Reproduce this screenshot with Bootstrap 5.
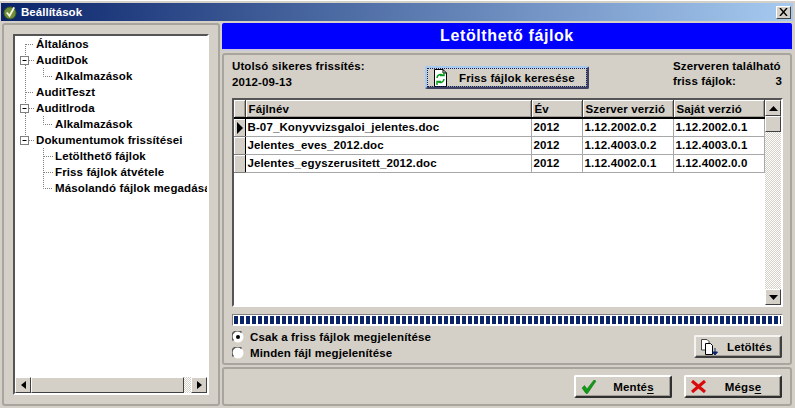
<!DOCTYPE html>
<html lang="hu">
<head>
<meta charset="UTF-8" />
<title>Beállítások</title>
<link rel="stylesheet" href="https://cdn.jsdelivr.net/npm/bootstrap@5.3.0/dist/css/bootstrap.min.css" />
<style>
  html, body { margin: 0; height: 408px; overflow: hidden; background: #d4d0c8; }
  body, .btn, table { font-family: "Liberation Sans", Arial, sans-serif; font-size: 11.5px; font-weight: 700; color: #000; letter-spacing: .12px; line-height: 16px; }
  .dlg-window { width: 795px; height: 408px; padding: 2px 3px 2px 2px; border-top: 1px solid #fff; }
  .title-bar { height: 18px; margin-left: -1px; margin-right: -1px; padding: 0 2px 0 2px; color: #fff; font-size: 11.5px; letter-spacing: .03px; background: linear-gradient(90deg, #0a246a, #a6caf0); }
  .title-icon { width: 14px; height: 15px; flex: none; }
  .close-box { width: 15px; height: 13px; background: #d4d0c8; border: 1px solid; border-color: #fff #404040 #404040 #fff; }
  .dlg-body { gap: 2px; margin-top: 2px; height: 383px; }
  .group-box { border: 2px solid #a8a59e; border-radius: 3px; background: #d4d0c8; }
  .side-panel { width: 218px; flex: none; padding: 9px; }
  .sunken { border: 2px solid; border-color: #555 #fff #fff #555; }
  .tree-box { height: 100%; background: #fff; }
  .tree-rows { flex: 1; overflow: hidden; }
  .tree-row { height: 16px; white-space: nowrap; }
  .tree-row svg { flex: none; display: block; }
  .h-bar { height: 16px; flex: none; background: #d4d0c8; }
  .sb-btn { flex: none; background: #d4d0c8; border: 1px solid; border-color: #fff #404040 #404040 #fff; }
  .h-bar .sb-btn { width: 16px; height: 16px; }
  .sb-thumb { background: #d4d0c8; border: 1px solid; border-color: #fff #404040 #404040 #fff; }
  .sb-track { background: repeating-conic-gradient(#fff 0 25%, #d4d0c8 0 50%) 0 0 / 2px 2px; }
  .main-col { flex: 1; min-width: 0; gap: 2px; }
  .head-strip { height: 28px; flex: none; background: #0000ff; color: #fff; font-size: 16px; letter-spacing: .6px; border-radius: 2px; border-bottom: 2px solid #c8c8e0; }
  .work-panel { height: 312px; flex: none; padding: 3px 7px 0 8px; }
  .info-row { height: 40px; }
  .info-left { width: 193px; flex: none; }
  .info-right { width: 109px; flex: none; margin: 1px 1px 0 auto; line-height: 15px; white-space: nowrap; }
  .w95-btn { --bs-btn-padding-y: 0; --bs-btn-padding-x: 0; --bs-btn-border-radius: 0; --bs-btn-hover-bg: #d4d0c8; background: #d4d0c8; border: 2px solid; border-color: #f4f3f0 #404040 #404040 #f4f3f0; border-radius: 2px; display: flex; align-items: center; color: #000; box-shadow: inset -1px -1px 0 #a09c94; }
  .search-btn { width: 164px; height: 23px; margin-top: 8px; padding-left: 6px; outline: 1px dotted #0a246a; outline-offset: -3px; border-color: #a6caf0 #404060 #404060 #a6caf0; }
  .search-btn span { margin-left: 11px; }
  .grid-box { height: 209px; background: #fff; width: 551px; }
  .file-grid { width: 530px; flex: none; }
  .file-grid table { width: 530px; table-layout: fixed; border-collapse: collapse; }
  .file-grid th { height: 18px; padding: 0 0 0 3px; background: #d4d0c8; border-right: 1px solid #404040; border-bottom: 2px solid #000; box-shadow: inset 1px 1px 0 #fff, inset -1px -1px 0 #a09c94; font-weight: 700; }
  .file-grid td { height: 18px; padding: 0 0 1px 2px; border-right: 1px solid #a8a8a8; border-bottom: 1px solid #a8a8a8; white-space: nowrap; overflow: hidden; background: #fff; }
  .file-grid .row-head { padding: 0; background: #d4d0c8; border-right: 1px solid #000; box-shadow: inset 1px 1px 0 #fff; border-bottom: 1px solid #808080; }
  .row-arrow { display: block; margin-left: 3px; }
  .v-bar { width: 16px; flex: none; margin-left: 1px; }
  .v-bar .sb-btn { height: 16px; }
  .v-bar .sb-thumb { height: 16px; flex: none; }
  .progress-box { height: 12px; margin-top: 7px; width: 551px; border-width: 1px; padding: 1px; background: #fff; border-color: #808080 #fff #fff #808080; }
  .progress-fill { height: 100%; background: repeating-linear-gradient(90deg, #0a246a 0 4px, #fff 4px 6px); }
  .radio-col { padding-top: 3px; }
  .radio-row { height: 16px; gap: 6px; }
  .radio-dot { width: 12px; height: 12px; flex: none; }
  .get-btn { width: 88px; height: 23px; margin: 9px 1px 0 0; padding-left: 4px; }
  .get-btn span { margin-left: 9px; }
  .foot-panel { height: 39px; flex: none; padding: 6px 8px 0 0; gap: 12px; }
  .foot-btn { width: 98px; height: 23px; padding-left: 5px; border-color: #fff #303030 #303030 #fff; }
  .foot-btn span { flex: 1; text-align: center; }
  .foot-btn u { text-underline-offset: 2px; }
</style>
</head>
<body>
<svg width="0" height="0" class="d-block">
  <defs>
    <symbol id="root-first" viewBox="0 0 21 16"><path d="M10.5 8V16M11 8.5H19" stroke="#808080" stroke-dasharray="1 1" fill="none"/></symbol>
    <symbol id="root-line" viewBox="0 0 21 16"><path d="M10.5 0V16M11 8.5H19" stroke="#808080" stroke-dasharray="1 1" fill="none"/></symbol>
    <symbol id="root-open" viewBox="0 0 21 16"><path d="M10.5 0V4M14 8.5H19" stroke="#808080" stroke-dasharray="1 1" fill="none"/><rect x="5.5" y="4.5" width="8" height="8" fill="#fff" stroke="#808080"/><path d="M7.5 8.5H11.5" stroke="#000"/></symbol>
    <symbol id="root-open-mid" viewBox="0 0 21 16"><path d="M10.5 0V4M10.5 13V16M14 8.5H19" stroke="#808080" stroke-dasharray="1 1" fill="none"/><rect x="5.5" y="4.5" width="8" height="8" fill="#fff" stroke="#808080"/><path d="M7.5 8.5H11.5" stroke="#000"/></symbol>
    <symbol id="kid-pass" viewBox="0 0 40 16"><path d="M10.5 0V16M28.5 0V8.5H38" stroke="#808080" stroke-dasharray="1 1" fill="none"/></symbol>
    <symbol id="kid-mid" viewBox="0 0 40 16"><path d="M28.5 0V16M29 8.5H38" stroke="#808080" stroke-dasharray="1 1" fill="none"/></symbol>
    <symbol id="kid-last" viewBox="0 0 40 16"><path d="M28.5 0V8.5H38" stroke="#808080" stroke-dasharray="1 1" fill="none"/></symbol>
  </defs>
</svg>
<div class="dlg-window d-flex flex-column">
  <div class="title-bar d-flex align-items-center gap-1">
    <svg class="title-icon" viewBox="0 0 15 15"><circle cx="7.5" cy="8" r="6.5" fill="#6f8f3a" stroke="#3c5a1c"/><path d="M4 7.5L7 11L12 2" fill="none" stroke="#f4f4e0" stroke-width="2"/></svg>
    <span class="flex-grow-1">Beállítások</span>
    <div class="close-box d-flex align-items-center justify-content-center">
      <svg width="9" height="8" viewBox="0 0 9 8"><path d="M1 0L8 8M8 0L1 8" stroke="#000" stroke-width="1.4"/></svg>
    </div>
  </div>

  <div class="dlg-body d-flex">
    <div class="group-box side-panel">
      <div class="tree-box sunken d-flex flex-column">
        <div class="tree-rows">
          <div class="tree-row d-flex align-items-center"><svg width="21" height="16"><use href="#root-first"/></svg>Általános</div>
          <div class="tree-row d-flex align-items-center"><svg width="21" height="16"><use href="#root-open-mid"/></svg>AuditDok</div>
          <div class="tree-row d-flex align-items-center"><svg width="40" height="16"><use href="#kid-pass"/></svg>Alkalmazások</div>
          <div class="tree-row d-flex align-items-center"><svg width="21" height="16"><use href="#root-line"/></svg>AuditTeszt</div>
          <div class="tree-row d-flex align-items-center"><svg width="21" height="16"><use href="#root-open-mid"/></svg>AuditIroda</div>
          <div class="tree-row d-flex align-items-center"><svg width="40" height="16"><use href="#kid-pass"/></svg>Alkalmazások</div>
          <div class="tree-row d-flex align-items-center"><svg width="21" height="16"><use href="#root-open"/></svg>Dokumentumok frissítései</div>
          <div class="tree-row d-flex align-items-center"><svg width="40" height="16"><use href="#kid-mid"/></svg>Letölthető fájlok</div>
          <div class="tree-row d-flex align-items-center"><svg width="40" height="16"><use href="#kid-mid"/></svg>Friss fájlok átvétele</div>
          <div class="tree-row d-flex align-items-center"><svg width="40" height="16"><use href="#kid-last"/></svg>Másolandó fájlok megadása</div>
        </div>
        <div class="h-bar d-flex">
          <div class="sb-btn d-flex align-items-center justify-content-center"><svg width="5" height="8"><path d="M5 0V8L0 4Z"/></svg></div>
          <div class="sb-thumb flex-grow-1"></div>
          <div class="sb-track" style="width:7px"></div>
          <div class="sb-btn d-flex align-items-center justify-content-center"><svg width="5" height="8"><path d="M0 0V8L5 4Z"/></svg></div>
        </div>
      </div>
    </div>

    <div class="main-col d-flex flex-column">
      <div class="head-strip d-flex align-items-center justify-content-center">Letölthető fájlok</div>

      <div class="group-box work-panel">
        <div class="info-row d-flex">
          <div class="info-left">Utolsó sikeres frissítés:<br />2012-09-13</div>
          <button type="button" class="btn w95-btn search-btn">
            <svg width="15" height="18" viewBox="0 0 15 18"><path d="M1.5.5H10L13.5 4V17.5H1.5Z" fill="#fff" stroke="#000"/><path d="M10 .5V4H13.5" fill="none" stroke="#000"/><path d="M4 9a3.5 3.5 0 0 1 6-2.5M7 6.5H11V3M11 10a3.5 3.5 0 0 1-6 2.5M8 12.5H4V16" fill="none" stroke="#0a9a1e" stroke-width="1.5"/></svg>
            <span>Friss fájlok keresése</span>
          </button>
          <div class="info-right">
            Szerveren található
            <div class="d-flex justify-content-between"><span>friss fájlok:</span><span>3</span></div>
          </div>
        </div>

        <div class="grid-box sunken d-flex">
          <div class="file-grid">
            <table>
              <colgroup><col style="width:11px" /><col style="width:286px" /><col style="width:51px" /><col style="width:91px" /><col style="width:91px" /></colgroup>
              <thead>
                <tr><th></th><th>Fájlnév</th><th>Év</th><th>Szerver verzió</th><th>Saját verzió</th></tr>
              </thead>
              <tbody>
                <tr><td class="row-head"><svg class="row-arrow" width="6" height="12"><path d="M0 0V12L6 6Z"/></svg></td><td>B-07_Konyvvizsgaloi_jelentes.doc</td><td>2012</td><td>1.12.2002.0.2</td><td>1.12.2002.0.1</td></tr>
                <tr><td class="row-head"></td><td>Jelentes_eves_2012.doc</td><td>2012</td><td>1.12.4003.0.2</td><td>1.12.4003.0.1</td></tr>
                <tr><td class="row-head"></td><td>Jelentes_egyszerusitett_2012.doc</td><td>2012</td><td>1.12.4002.0.1</td><td>1.12.4002.0.0</td></tr>
              </tbody>
            </table>
          </div>
          <div class="v-bar d-flex flex-column">
            <div class="sb-btn d-flex align-items-center justify-content-center"><svg width="9" height="5"><path d="M0 5H9L4.5 0Z"/></svg></div>
            <div class="sb-thumb"></div>
            <div class="sb-track flex-grow-1"></div>
            <div class="sb-btn d-flex align-items-center justify-content-center"><svg width="9" height="5"><path d="M0 0H9L4.5 5Z"/></svg></div>
          </div>
        </div>

        <div class="progress-box sunken"><div class="progress-fill"></div></div>

        <div class="d-flex justify-content-between">
          <div class="radio-col">
            <div class="radio-row d-flex align-items-center">
              <svg class="radio-dot" viewBox="0 0 12 12"><circle cx="6" cy="6" r="5.5" fill="#fff"/><path d="M1.5 9.5A5.5 5.5 0 0 1 9.5 1.5" fill="none" stroke="#555" stroke-width="1.5"/><circle cx="6" cy="6" r="2"/></svg>
              <span>Csak a friss fájlok megjelenítése</span>
            </div>
            <div class="radio-row d-flex align-items-center">
              <svg class="radio-dot" viewBox="0 0 12 12"><circle cx="6" cy="6" r="5.5" fill="#fff"/><path d="M1.5 9.5A5.5 5.5 0 0 1 9.5 1.5" fill="none" stroke="#555" stroke-width="1.5"/></svg>
              <span>Minden fájl megjelenítése</span>
            </div>
          </div>
          <button type="button" class="btn w95-btn get-btn">
            <svg width="18" height="18" viewBox="0 0 18 18"><path d="M1.5 1.5H7L9 3.500V12H1.500Z" fill="#fff" stroke="#444"/><path d="M5.500 5.500H10.500L12.500 7.500V16.500H5.500Z" fill="#fff" stroke="#000"/><path d="M15 10V15M12.500 14H17.500L15 17Z" fill="#0a246a" stroke="#0a246a"/></svg>
            <span>Letöltés</span>
          </button>
        </div>
      </div>

      <div class="group-box foot-panel d-flex justify-content-end">
        <button type="button" class="btn w95-btn foot-btn">
          <svg width="16" height="14" viewBox="0 0 16 14"><path d="M1 8L3.500 5.500L6 9L13 0L15 1L6.500 13.500H5Z" fill="#0f9b16" stroke="#0a6a10" stroke-width=".5"/></svg>
          <span>Menté<u>s</u></span>
        </button>
        <button type="button" class="btn w95-btn foot-btn">
          <svg width="15" height="13" viewBox="0 0 15 13"><path d="M1 1L14 12M14 1L1 12" stroke="#d80a0a" stroke-width="3.200"/></svg>
          <span>Mégs<u>e</u></span>
        </button>
      </div>
    </div>
  </div>
</div>
<script src="https://cdn.jsdelivr.net/npm/bootstrap@5.3.0/dist/js/bootstrap.bundle.min.js"></script>
</body>
</html>
